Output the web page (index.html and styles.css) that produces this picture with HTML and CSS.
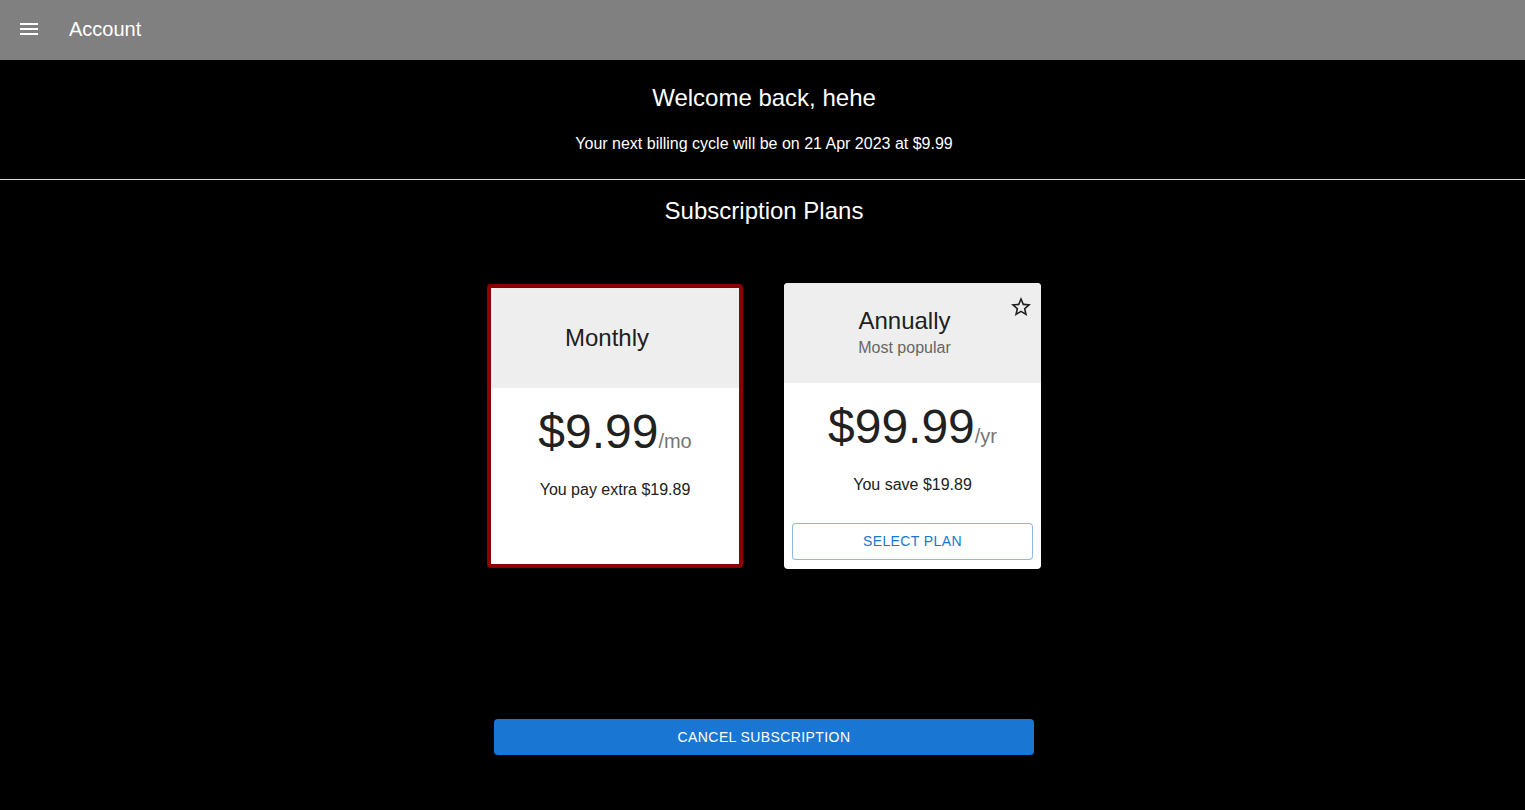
FILE: index.html
```html
<!DOCTYPE html>
<html lang="en">
<head>
<meta charset="utf-8">
<title>Account</title>
<link rel="stylesheet" href="styles.css">
</head>
<body>
<header class="appbar">
  <svg class="menu-icon" viewBox="0 0 24 24" width="24" height="24"><path fill="#fff" d="M3 18h18v-2H3v2zm0-5h18v-2H3v2zm0-7v2h18V6H3z"/></svg>
  <span class="appbar-title">Account</span>
</header>
<main class="main">
  <section class="welcome">
    <h1 class="welcome-title">Welcome back, hehe</h1>
    <p class="welcome-sub">Your next billing cycle will be on 21 Apr 2023 at $9.99</p>
  </section>
  <hr class="divider">
  <h2 class="plans-title">Subscription Plans</h2>
  <div class="plans">
    <div class="card card-selected">
      <div class="card-header">
        <div class="card-title">Monthly</div>
      </div>
      <div class="card-body">
        <div class="price"><span class="amount">$9.99</span><span class="period">/mo</span></div>
        <div class="note">You pay extra $19.89</div>
      </div>
    </div>
    <div class="card">
      <div class="card-header">
        <div class="card-title">Annually</div>
        <div class="card-sub">Most popular</div>
        <svg class="star" viewBox="0 0 24 24" width="24" height="24"><path fill="#212121" d="M22 9.24l-7.19-.62L12 2 9.19 8.63 2 9.24l5.46 4.73L5.82 21 12 17.27 18.18 21l-1.63-7.03L22 9.24zM12 15.4l-3.76 2.27 1-4.28-3.32-2.88 4.38-.38L12 6.1l1.71 4.04 4.38.38-3.32 2.88 1 4.28L12 15.4z"/></svg>
      </div>
      <div class="card-body">
        <div class="price"><span class="amount">$99.99</span><span class="period">/yr</span></div>
        <div class="note">You save $19.89</div>
      </div>
      <div class="card-actions">
        <button class="btn-outlined">Select plan</button>
      </div>
    </div>
  </div>
  <div class="cancel-row">
    <button class="btn-cancel">Cancel subscription</button>
  </div>
</main>
</body>
</html>
```
FILE: styles.css
```css
* { box-sizing: border-box; }
html, body { margin: 0; padding: 0; }
body {
  background: #000;
  color: #fff;
  font-family: "Liberation Sans", Arial, sans-serif;
}
.appbar {
  height: 60px;
  background: #808080;
  display: flex;
  align-items: center;
  padding-left: 17px;
  padding-bottom: 3px;
}
.menu-icon { display: block; flex: none; }
.appbar-title {
  margin-left: 28px;
  font-size: 20px;
  line-height: 28px;
  color: #fff;
}
.main {
  padding-left: 3px;
}
.welcome {
  text-align: center;
  padding-top: 22px;
}
.welcome-title {
  margin: 0;
  font-size: 24px;
  line-height: 32px;
  font-weight: 400;
}
.welcome-sub {
  margin: 18px 0 0;
  font-size: 16px;
  line-height: 24px;
}
.divider {
  margin: 23px 0 0 -3px;
  border: 0;
  border-top: 1px solid #d8d8d8;
  height: 0;
}
.plans-title {
  margin: 15px 0 0;
  text-align: center;
  font-size: 24px;
  line-height: 32px;
  font-weight: 400;
}
.plans {
  margin-top: 56px;
  display: flex;
  justify-content: center;
  gap: 41px;
}
.card {
  width: 256px;
  background: #fff;
  color: #212121;
  border-radius: 4px;
  overflow: hidden;
  display: flex;
  flex-direction: column;
  position: relative;
}
.card + .card { width: 257px; }
.card-selected {
  border: 4px solid #8b0000;
  margin-top: 1px;
  margin-bottom: 1px;
}
.card-header {
  height: 100px;
  background: #eeeeee;
  display: flex;
  flex-direction: column;
  align-items: center;
  justify-content: center;
  position: relative;
  padding-right: 16px;
}
.card-title {
  font-size: 24px;
  line-height: 32px;
  color: #212121;
}
.card-sub {
  font-size: 16px;
  line-height: 22px;
  color: #666;
  margin-bottom: 2px;
}
.star {
  position: absolute;
  top: 12px;
  right: 8px;
}
.card-body {
  padding-top: 16px;
  text-align: center;
}
.price {
  height: 56px;
  line-height: 56px;
  white-space: nowrap;
}
.amount {
  font-size: 48px;
  color: #212121;
}
.period {
  font-size: 20px;
  color: #757575;
}
.note {
  margin-top: 18px;
  font-size: 16px;
  line-height: 24px;
  color: #212121;
}
.card-actions {
  padding: 26px 8px 9px;
}
.btn-outlined {
  display: block;
  width: 100%;
  height: 37px;
  padding: 0 0 2px;
  background: #fff;
  border: 1px solid rgba(25, 118, 210, 0.5);
  border-radius: 4px;
  color: #1976d2;
  font-family: "Liberation Sans", Arial, sans-serif;
  font-size: 14px;
  letter-spacing: 0.4px;
  text-transform: uppercase;
  cursor: pointer;
}
.cancel-row {
  margin-top: 150px;
  display: flex;
  justify-content: center;
}
.btn-cancel {
  width: 540px;
  height: 36px;
  background: #1976d2;
  border: 0;
  border-radius: 4px;
  color: #fff;
  font-family: "Liberation Sans", Arial, sans-serif;
  font-size: 14px;
  letter-spacing: 0.4px;
  text-transform: uppercase;
  cursor: pointer;
}
```
